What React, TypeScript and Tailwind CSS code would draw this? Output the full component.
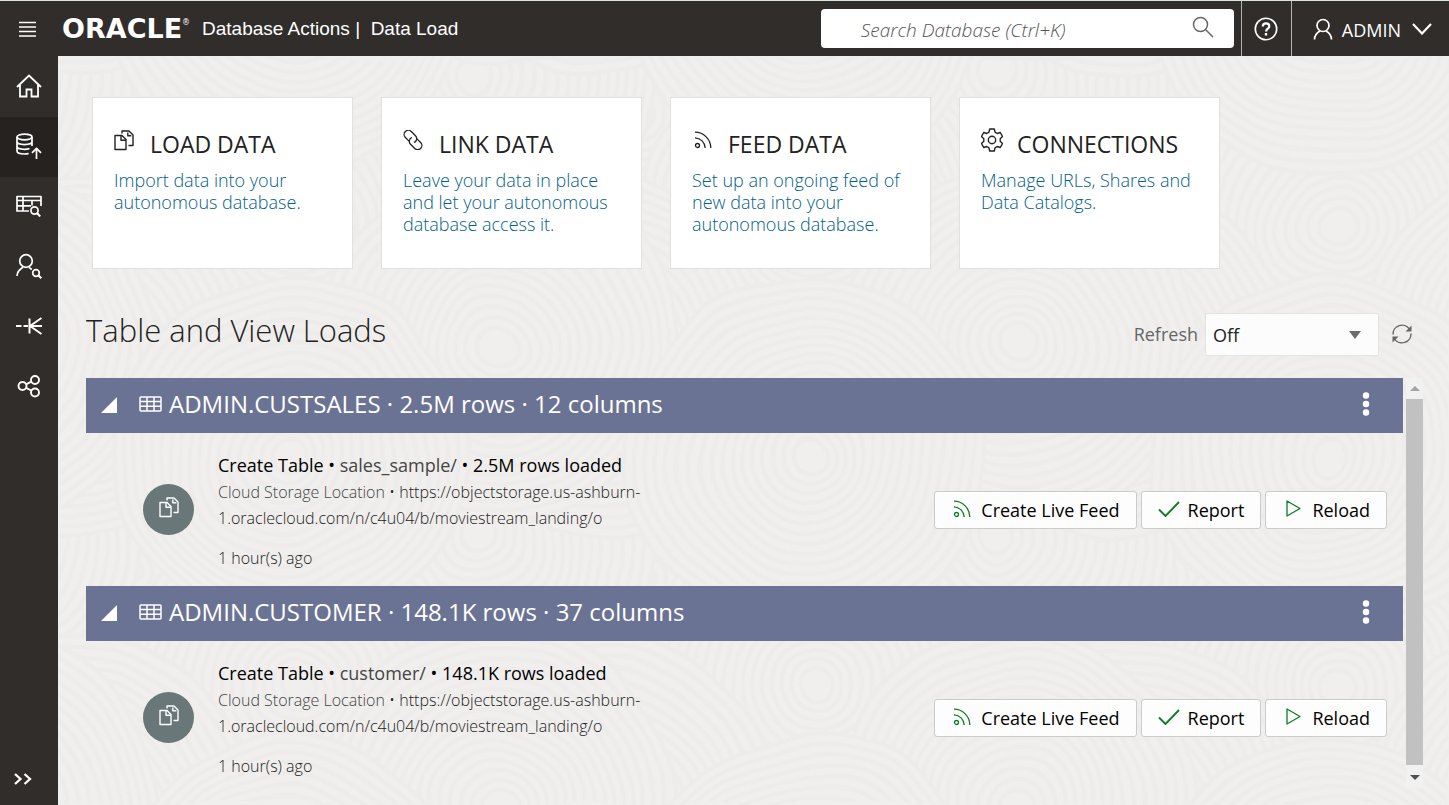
import React from "react";

type IconProps = { className?: string };

const stroke = {
  fill: "none",
  stroke: "currentColor",
  strokeLinecap: "butt" as const,
  strokeLinejoin: "round" as const,
};

const HomeIcon = () => (
  <svg viewBox="0 0 26 24" className="h-6 w-[26px]" {...stroke} strokeWidth="1.8">
    <path d="M1 13 13 1.5 25 13M4 10.5V22.5h6.5v-7h5v7H22V10.5" strokeLinejoin="miter" />
  </svg>
);

const DatabaseUpIcon = () => (
  <svg viewBox="0 0 26 26" className="h-[26px] w-[26px]" {...stroke} strokeWidth="1.7">
    <ellipse cx="8.5" cy="4" rx="7.5" ry="2.8" />
    <path d="M1 4v14c0 1.8 3.2 3 7.5 3 1.600 0 3-.2 4.200-.5M16 4v9M1 8.600c0 1.700 3.200 3 7.500 3s7.500-1.300 7.500-3M1 13.300c0 1.700 3.200 3 7.500 3 2 0 3.800-.3 5-.8" />
    <path d="M20.500 26V15.500M16 19.800l4.500-4.500 4.500 4.500" />
  </svg>
);

const TableSearchIcon = () => (
  <svg viewBox="0 0 26 22" className="h-[22px] w-[26px]" {...stroke} strokeWidth="1.7">
    <path d="M13 16H1V1.500h24V11M1 5.500h24M1 10.800h14M7 1.500V16M16 5.500v5" />
    <circle cx="18.500" cy="15.500" r="3.600" />
    <path d="m21 18 3.200 3.500" strokeWidth="2" />
  </svg>
);

const UserSearchIcon = () => (
  <svg viewBox="0 0 26 26" className="h-[26px] w-[26px]" {...stroke} strokeWidth="1.7">
    <circle cx="10" cy="8" r="6.300" />
    <path d="M1 23c.3-4 2.200-6.500 6-8.700M13 14.300l2.800 2.200" />
    <circle cx="20" cy="20" r="3.300" />
    <path d="m22.300 22.300 3 3" strokeWidth="2" />
  </svg>
);

const ImpactIcon = () => (
  <svg viewBox="0 0 26 20" className="h-5 w-[26px]" {...stroke} strokeWidth="2">
    <path d="M0 10h5.500M7.500 10h4.500M13.500 2.500v15M14 10h12M14 10 25.500 2M14 10l11.500 8" />
  </svg>
);

const ShareIcon = () => (
  <svg viewBox="0 0 24 24" className="h-6 w-6" {...stroke} strokeWidth="1.900">
    <circle cx="5.500" cy="12" r="4" />
    <circle cx="18" cy="6" r="4" />
    <circle cx="18" cy="18.500" r="4" />
    <path d="m9 10.300 5.300-2.600M9 13.800l5.300 2.700" />
  </svg>
);

const CopyIcon = ({ className }: IconProps) => (
  <svg viewBox="0 0 20 21" className={className} {...stroke} strokeWidth="1.400">
    <path d="M1 5.500h7l4 4V19.500H1zM7 5.800v4.500h4.500" />
    <path d="M8 3.500V1h7l4 4v10.500h-4.500M13.800 2.500v3.300h3.500" />
  </svg>
);

const LinkIcon = ({ className }: IconProps) => (
  <svg viewBox="0 0 20 20" className={className} {...stroke} strokeWidth="1.300">
    <g transform="rotate(45 10 10)">
      <path d="M8 13.600H2.800a4.200 4.200 0 0 1 0-8.400h5.900a4.200 4.200 0 0 1 3.900 5.800" />
      <path d="M12 6.400h5.200a4.200 4.200 0 0 1 0 8.400h-5.900a4.200 4.200 0 0 1-3.900-5.800" />
    </g>
  </svg>
);

const FeedIcon = ({ className }: IconProps) => (
  <svg viewBox="0 0 18 18" className={className} {...stroke} strokeWidth="1.300">
    <circle cx="3.500" cy="14.500" r="2" />
    <path d="M1 6.800c5.600.2 10 4.600 10.200 10.200M1 1.200C9.700 1.200 16.800 8.300 16.800 17" />
  </svg>
);

const GearIcon = ({ className }: IconProps) => (
  <svg viewBox="0 0 22 24" className={className} {...stroke} strokeWidth="1.400">
    <path d="M8.700 1h4.600l.7 3.200 2.200 1.300 3.100-1 2.200 4-2.300 2.200v2.600l2.300 2.200-2.200 4-3.100-1-2.200 1.300-.7 3.200H8.700L8 19.800l-2.200-1.300-3.100 1-2.200-4 2.300-2.200v-2.600L.5 8.500l2.200-4 3.100 1L8 4.200z" />
    <circle cx="11" cy="12" r="3.700" />
  </svg>
);

const GridIcon = ({ className }: IconProps) => (
  <svg viewBox="0 0 23 16" className={className} {...stroke} strokeWidth="1.500">
    <rect x="1" y="1" width="21" height="14" rx="1" />
    <path d="M1 5.500h21M1 10.300h21M8 1v14M15 1v14" />
  </svg>
);

const CheckIcon = ({ className }: IconProps) => (
  <svg viewBox="0 0 22 16" className={className} {...stroke} strokeWidth="1.900">
    <path d="M1 8.500 7.500 15 21 1" strokeLinejoin="miter" />
  </svg>
);

const PlayIcon = ({ className }: IconProps) => (
  <svg viewBox="0 0 15 17" className={className} {...stroke} strokeWidth="1.300">
    <path d="M1 1v15l13-7.500z" />
  </svg>
);

const SyncIcon = () => (
  <svg viewBox="0 0 20 20" className="h-5 w-5" {...stroke} strokeWidth="1.400">
    <path d="M1 10.500A9 9 0 0 1 17.500 5.200M19 9.500A9 9 0 0 1 2.500 14.800" />
    <path d="M19.500 1.500v6h-6zM.5 18.500v-6h6z" fill="currentColor" stroke="none" />
  </svg>
);

const RIPPLES = [
  [60, 60], [420, 20], [240, 170], [20, 300], [440, 290], [230, 400],
];
const OFFSETS = [[-520, -460], [0, -460], [520, -460], [-520, 0], [0, 0], [520, 0], [-520, 460], [0, 460], [520, 460]];
const RADII = Array.from({ length: 17 }, (_, i) => 178 - i * 10);

const Backdrop = () => (
  <svg aria-hidden="true" className="pointer-events-none absolute inset-0 h-full w-full">
    <defs>
      <filter id="waver" x="0" y="0" width="100%" height="100%">
        <feTurbulence type="fractalNoise" baseFrequency="0.008" numOctaves="2" seed="4" />
        <feDisplacementMap in="SourceGraphic" scale="24" xChannelSelector="R" yChannelSelector="G" />
      </filter>
      <pattern id="ripples" width="520" height="460" patternUnits="userSpaceOnUse">
        <rect width="520" height="460" fill="#f0efed" />
        {RIPPLES.map(([cx, cy]) =>
          OFFSETS.map(([dx, dy]) => (
            <g key={`${cx}-${cy}-${dx}-${dy}`} fill="#f0efed" stroke="#edeceb" strokeWidth="4">
              {RADII.map((r) => (
                <circle key={r} cx={cx + dx} cy={cy + dy} r={r} />
              ))}
            </g>
          ))
        )}
      </pattern>
    </defs>
    <rect width="100%" height="100%" fill="url(#ripples)" filter="url(#waver)" />
  </svg>
);

const NAV = [
  { label: "Home", icon: <HomeIcon /> },
  { label: "Data Load", icon: <DatabaseUpIcon />, active: true },
  { label: "Catalog", icon: <TableSearchIcon /> },
  { label: "Data Insights", icon: <UserSearchIcon /> },
  { label: "Data Transforms", icon: <ImpactIcon /> },
  { label: "Data Share", icon: <ShareIcon /> },
];

const CARDS = [
  { title: "LOAD DATA", text: "Import data into your autonomous database.", icon: <CopyIcon className="h-[21px] w-5" /> },
  { title: "LINK DATA", text: "Leave your data in place and let your autonomous database access it.", icon: <LinkIcon className="h-5 w-5" /> },
  { title: "FEED DATA", text: "Set up an ongoing feed of new data into your autonomous database.", icon: <FeedIcon className="ml-0.5 h-[18px] w-[18px]" /> },
  { title: "CONNECTIONS", text: "Manage URLs, Shares and Data Catalogs.", icon: <GearIcon className="h-6 w-[22px]" /> },
];

const LOADS = [
  { name: "ADMIN.CUSTSALES", rows: "2.5M", cols: 12, folder: "sales_sample/" },
  { name: "ADMIN.CUSTOMER", rows: "148.1K", cols: 37, folder: "customer/" },
];

function ActionButton({ icon, children }: { icon: React.ReactNode; children: React.ReactNode }) {
  return (
    <button className="flex h-[38px] items-center gap-2 rounded-[3px] border border-[#c8cccc] bg-[#fdfdfd] px-4 pt-0.5 text-[18px] text-black">
      <span className="flex w-[22px] justify-center pb-1 text-[#107c25]">{icon}</span>
      {children}
    </button>
  );
}

function LoadEntry({ name, rows, cols, folder }: (typeof LOADS)[number]) {
  return (
    <section>
      <header className="flex h-[55px] items-center bg-[#6b7394] pb-1 pl-[15px] pr-[33px] text-white">
        <button aria-label="Collapse" className="mr-[22px] pt-0.5">
          <svg viewBox="0 0 16 16" className="h-4 w-4" fill="currentColor"><path d="M16 0v16H0z" /></svg>
        </button>
        <GridIcon className="mr-[7px] h-4 w-[23px]" />
        <h2 className="flex-1 text-[24px] leading-8">{name} · {rows} rows · {cols} columns</h2>
        <button aria-label="More actions">
          <svg viewBox="0 0 8 24" className="h-6 w-2" fill="currentColor">
            <circle cx="4" cy="3.500" r="3.200" /><circle cx="4" cy="12" r="3.200" /><circle cx="4" cy="20.500" r="3.200" />
          </svg>
        </button>
      </header>
      <div className="flex items-center pb-[15px] pl-[57px] pr-4 pt-[19px]">
        <span className="mb-1 mr-6 flex h-[51px] w-[51px] shrink-0 items-center justify-center rounded-full bg-[#697778] text-white">
          <CopyIcon className="mb-1 h-[21px] w-5" />
        </span>
        <div className="w-[460px] text-[16px] font-light leading-[26px] text-[#222]">
          <p className="text-[18px] font-normal leading-[27px] text-black">Create Table • <span className="text-[#444]">{folder}</span> • {rows} rows loaded</p>
          <p><span className="text-[#444]">Cloud Storage Location</span> • https://objectstorage.us-ashburn-<wbr />1.oraclecloud.com/n/c4u04/b/moviestream_landing/o</p>
          <p className="mt-3.5">1 hour(s) ago</p>
        </div>
        <div className="mb-1 ml-auto flex gap-1">
          <ActionButton icon={<FeedIcon className="h-[18px] w-[18px]" />}>Create Live Feed</ActionButton>
          <ActionButton icon={<CheckIcon className="h-4 w-[22px]" />}>Report</ActionButton>
          <ActionButton icon={<PlayIcon className="h-[17px] w-[15px]" />}>Reload</ActionButton>
        </div>
      </div>
    </section>
  );
}

export default function App() {
  return (
    <div className="flex min-h-screen flex-col bg-[#f0efed] font-['Open_Sans',sans-serif] text-[#222]">
      <header className="flex h-14 items-stretch border-t border-[#dde3dd] bg-[#312d2a] text-white">
        <button aria-label="Menu" className="ml-[19px] mr-[26px]">
          <svg viewBox="0 0 17 16" className="h-4 w-[17px]" {...stroke} strokeWidth="1.500">
            <path d="M0 1.500h17M0 6h17M0 10.500h17M0 15h17" />
          </svg>
        </button>
        <a href="#home" className="flex items-center font-['Liberation_Sans',sans-serif] text-[19px]">
          <span className="flex w-[140px] items-start font-['DejaVu_Sans',sans-serif] text-[27px] font-bold leading-8">
            ORACLE<sup className="top-0 pt-1.5 text-[8px] font-normal leading-none">®</sup>
          </span>
          <span className="whitespace-pre pt-0.5">Database Actions |  Data Load</span>
        </a>
        <label className="my-2 ml-auto mr-[7px] flex h-[39px] w-[413px] items-center rounded-[4px] bg-white px-5 text-[#666]">
          <input aria-label="Search Database" placeholder="Search Database (Ctrl+K)" className="min-w-0 flex-1 bg-transparent pl-5 pt-1 text-[19px] font-light italic outline-none placeholder:text-[#555]" />
          <svg viewBox="0 0 22 22" className="mb-1 h-[22px] w-[22px]" {...stroke} strokeWidth="1.500">
            <circle cx="8.500" cy="8.500" r="7" /><path d="m13.500 13.500 7.500 7.500" />
          </svg>
        </label>
        <button aria-label="Help" className="flex w-[50px] items-center justify-center border-l border-[#b5b3b1]">
          <svg viewBox="0 0 24 24" className="h-6 w-6" {...stroke} strokeWidth="1.600">
            <circle cx="12" cy="12" r="10.700" /><path d="M8.800 9.500c0-4.300 6.500-4 6.500-.3 0 2.500-3.200 2.500-3.200 5.300" strokeWidth="2.200" /><path d="M12 16v2.500" strokeWidth="2.400" />
          </svg>
        </button>
        <button className="flex items-center border-l border-[#b5b3b1] pl-[21px] pr-[17px] text-[18px]">
          <svg viewBox="0 0 20 22" className="mr-[9px] h-[22px] w-5" {...stroke} strokeWidth="1.700">
            <circle cx="10" cy="7.500" r="6" /><path d="M1.500 21.500c0-4.500 2-6.500 5.500-8.500M18.500 21.500c0-4.500-2-6.500-5.500-8.500" />
          </svg>
          <span className="pt-1">ADMIN</span>
          <svg viewBox="0 0 20 12" className="ml-[11px] h-3 w-5" {...stroke} strokeWidth="2.200"><path d="m1 1 9 9.500L19 1" strokeLinejoin="miter" /></svg>
        </button>
      </header>

      <div className="flex flex-1">
        <nav className="flex w-[58px] shrink-0 flex-col bg-[#312d2a] pt-px text-white">
          {NAV.map((n) => (
            <a key={n.label} href="#nav" aria-label={n.label} className={n.active ? "flex h-[60px] items-center justify-center bg-[#26221f] pb-0.5" : "flex h-[60px] items-center justify-center pb-0.5"}>
              {n.icon}
            </a>
          ))}
          <button aria-label="Expand navigation" className="mb-5 ml-3.5 mt-auto">
            <svg viewBox="0 0 18 12" className="h-3 w-[18px]" {...stroke} strokeWidth="2.300"><path d="m1 1 5.500 5L1 11M10.500 1l5.500 5-5.500 5" strokeLinejoin="miter" /></svg>
          </button>
        </nav>

        <main className="relative min-w-0 flex-1">
          <Backdrop />
          <div className="relative pb-2 pl-7 pr-[26px] pt-[41px]">
            <div className="flex flex-wrap gap-7 pl-1.5">
              {CARDS.map((c) => (
                <a key={c.title} href="#card" className="min-h-[172px] w-[261px] border border-[#dfe1e1] bg-white px-[21px] pt-[30px]">
                  <h2 className="flex items-center text-[23px] leading-8 text-[#222]">
                    <span className="mb-2 flex w-9 shrink-0">{c.icon}</span>
                    {c.title}
                  </h2>
                  <p className="mt-[9px] text-[18px] font-light leading-[22px] text-[#00618a]">{c.text}</p>
                </a>
              ))}
            </div>

            <div className="mb-[22px] mt-11 flex items-center">
              <h1 className="flex-1 pb-2.5 text-[31px] font-light leading-8">Table and View Loads</h1>
              <label htmlFor="refresh" className="mr-[7px] text-[18px] text-[#666]">Refresh</label>
              <div className="relative">
                <select id="refresh" className="h-[43px] w-[174px] appearance-none rounded-[2px] border border-[#e3e3e3] bg-[#fcfcfc] pl-[7px] pt-0.5 text-[18px] text-[#222]">
                  <option>Off</option>
                </select>
                <svg viewBox="0 0 12 8" className="pointer-events-none absolute right-[18px] top-[18px] h-2 w-3" fill="#6b6b6b"><path d="M0 0h12L6 8z" /></svg>
              </div>
              <button aria-label="Refresh now" className="ml-[13px] mr-[11px] pb-0.5 text-[#666]"><SyncIcon /></button>
            </div>

            <div className="flex">
              <div className="mr-[3px] min-w-0 flex-1">
                {LOADS.map((l) => <LoadEntry key={l.name} {...l} />)}
              </div>
              <div aria-hidden="true" className="mb-1.5 flex w-[17px] flex-col items-center bg-[#f1f1f1]">
                <svg viewBox="0 0 10 5" className="my-2 h-[5px] w-2.5 shrink-0" fill="#a3a3a3"><path d="M0 5h10L5 0z" /></svg>
                <span className="w-[17px] flex-1 bg-[#c1c1c1]" />
                <svg viewBox="0 0 10 5" className="mb-2 mt-2.5 h-[5px] w-2.5 shrink-0" fill="#505050"><path d="M0 0h10L5 5z" /></svg>
              </div>
            </div>
          </div>
        </main>
      </div>
    </div>
  );
}
